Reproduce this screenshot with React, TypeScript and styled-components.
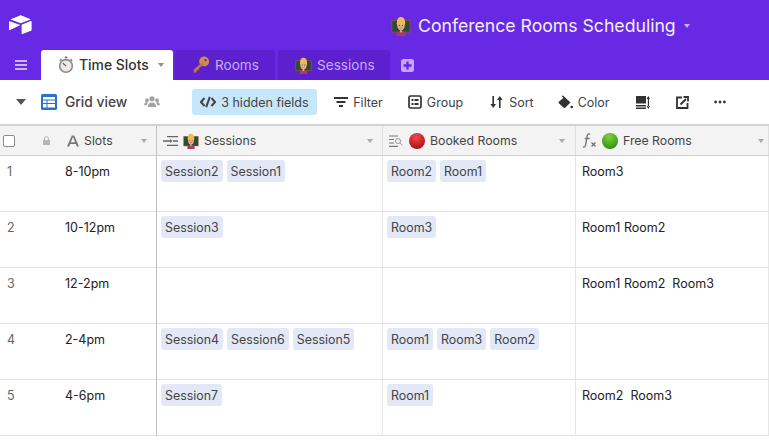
import React from "react";
import styled, { createGlobalStyle } from "styled-components";

const Global = createGlobalStyle`
  html, body { margin: 0; padding: 0; background: #fff; overflow: hidden; }
  body { font-family: Inter, "Liberation Sans", sans-serif; -webkit-font-smoothing: antialiased; }
  #root { width: 769px; height: 444px; overflow: hidden; }
`;

const Page = styled.div`width: 769px; height: 444px; overflow: hidden; display: flex; flex-direction: column;`;
const TopBar = styled.header`height: 50px; background: #6729e3; display: flex; align-items: center; padding: 2px 0 0 9px; box-sizing: border-box; flex: none;`;
const LogoSlot = styled.div`width: 382px; display: flex; align-items: center; height: 26px; flex: none; margin-top: -3px;`;
const Title = styled.div`display: flex; align-items: center; gap: 7px; color: #f3edff; font-size: 17.65px; line-height: 26px; white-space: nowrap;`;
const Caret = styled.span<{ $c: string; $w?: number; $ml?: number }>`
  display: inline-block; flex: none; width: 0; height: 0;
  margin-left: ${p => p.$ml ?? 0}px;
  border-left: ${p => (p.$w ?? 7) / 2}px solid transparent;
  border-right: ${p => (p.$w ?? 7) / 2}px solid transparent;
  border-top: ${p => Math.round((p.$w ?? 7) * 0.62)}px solid ${p => p.$c};
`;
const TabBar = styled.nav`height: 30px; background: #6729e3; display: flex; align-items: flex-end; flex: none;`;
const Menu = styled.div`width: 41px; height: 30px; display: flex; align-items: center; justify-content: center; flex: none;`;
const ActiveTab = styled.div`width: 132px; height: 30px; background: #fff; border-radius: 3px 3px 0 0; display: flex; align-items: center; padding-left: 17px; box-sizing: border-box; gap: 5px; font-size: 13.9px; font-weight: 500; color: #333; flex: none; margin-right: 2px;`;
const Tab = styled.div<{ $w: number; $pl: number }>`width: ${p => p.$w}px; height: 30px; background: #5c20cf; border-radius: 3px 3px 0 0; display: flex; align-items: center; padding-left: ${p => p.$pl}px; box-sizing: border-box; gap: 5px; font-size: 13.6px; color: #c7aef5; flex: none; margin-right: 3px;`;
const AddTab = styled.div`width: 26px; height: 30px; display: flex; align-items: center; justify-content: center; margin-left: 1px;`;
const Toolbar = styled.div`height: 44px; display: flex; align-items: center; flex: none; font-size: 12.5px; color: #444; background: #fff; padding-left: 16px; box-sizing: border-box;`;
const ToolCaret = styled.span`display: flex; margin-right: 15px;`;
const ViewName = styled.span`font-size: 13.8px; font-weight: 500; color: #444; margin: 0 17px 0 8px;`;
const HiddenBtn = styled.div`width: 125px; height: 26px; margin-left: 32px; background: #c6e6f9; border-radius: 3px; display: flex; align-items: center; padding-left: 8px; box-sizing: border-box; gap: 5px; flex: none; margin-right: 17px;`;
const ToolBtn = styled.div<{ $mr: number; $gap?: number }>`display: flex; align-items: center; gap: ${p => p.$gap ?? 6}px; margin-right: ${p => p.$mr}px; flex: none;`;
const Grid = styled.div`display: grid; grid-template-columns: 157px 226px 193px 193px; grid-template-rows: 32px repeat(5, 56px); flex: none; width: 769px;`;
const HeaderRow = styled.div`grid-column: 1 / -1; display: grid; grid-template-columns: 157px 226px 193px 193px; height: 32px; background: #f3f3f3; border-top: 2px solid #d2d2d2; border-bottom: 1px solid #cfcfcf; box-sizing: border-box;`;
const HeadCell = styled.div<{ $strong?: boolean; $pl: number; $pr: number }>`display: flex; align-items: center; gap: 5px; padding: 0 ${p => p.$pr}px 0 ${p => p.$pl}px; border-right: 1px solid ${p => p.$strong ? "#c0c0c0" : "#dedede"}; font-size: 12.3px; color: #444; min-width: 0;`;
const Grow = styled.span`flex: 1;`;
const Check = styled.span`width: 10px; height: 10px; background: #fff; border: 1px solid #8a8a8a; border-radius: 2px; flex: none; margin-right: 22px;`;
const LockSlot = styled.span`display: flex; margin-right: 11px;`;
const Cell = styled.div<{ $strong?: boolean; $pl: number }>`border-right: 1px solid ${p => p.$strong ? "#c0c0c0" : "#e6e6e6"}; border-bottom: 1px solid #e0e0e0; box-sizing: border-box; padding: 4px 0 0 ${p => p.$pl}px; display: flex; align-items: flex-start; gap: 4px; font-size: 12.5px; line-height: 24px; color: #222; white-space: pre; min-width: 0;`;
const RowNum = styled.span`width: 54px; flex: none; color: #666; font-size: 12.5px; margin-left: 1px;`;
const Chip = styled.span`display: inline-block; height: 22px; line-height: 24px; background: #e2e8f6; color: #444; padding: 0 4px; border-radius: 3px; font-size: 12.4px;`;

const Logo = () => (
  <svg width="23" height="20" viewBox="0 0 23 20">
    <path d="M11 .4 2.300 3.900c-.4.2-.4.6 0 .8l8.800 3.400c.4.1.9.1 1.300 0l8.600-3.400c.4-.2.4-.6 0-.8L12.400.4c-.4-.2-1-.2-1.400 0z" fill="#fff" />
    <path d="M12.600 10.200v8.400c0 .4.4.7.8.5l8.700-3.400c.3-.1.5-.4.5-.7V6.600c0-.4-.4-.7-.8-.5l-8.700 3.400c-.3.1-.5.4-.5.7z" fill="#fff" />
    <path d="M10.600 10.600 1 15.100c-.4.2-1 0-1-.5V6.700c0-.4.4-.7.8-.5l9.800 3.600c.4.2.4.6 0 .8z" fill="#fff" />
  </svg>
);
const Teacher = ({ s = 20 }: { s?: number }) => (
  <svg width={s} height={s} viewBox="0 0 20 20" style={{ flex: "none" }}>
    <rect x="0.500" y="4" width="19" height="12.500" fill="#8a5a2c" />
    <rect x="1.300" y="4.800" width="17.400" height="10.900" fill="#2f4a38" />
    <path d="M5.500 20v-2.500c0-1.500 1.500-2.500 4.500-2.500s4.500 1 4.500 2.500V20z" fill="#a23f63" />
    <path d="M8.700 14.500h2.600L10 17z" fill="#f1d3ae" />
    <path d="M5.800 7.500C5.800 3 7.500 1 10 1s4.200 2 4.200 6.500l-.6 2H6.400z" fill="#e9bd5c" />
    <ellipse cx="10" cy="9.700" rx="3.600" ry="4.600" fill="#e9b47e" />
    <path d="M6.200 8.200c1.400-2 6.200-2 7.600 0C13.300 4 6.700 4 6.200 8.200z" fill="#e9bd5c" />
    <circle cx="8.500" cy="9.300" r=".6" fill="#4a2e1e" /><circle cx="11.500" cy="9.300" r=".6" fill="#4a2e1e" />
    <path d="M8.700 11.900q1.300.8 2.600 0" stroke="#a8573a" strokeWidth=".6" fill="none" />
  </svg>
);
const Stopwatch = () => (
  <svg width="16" height="18" viewBox="0 0 18 20">
    <rect x="7.500" y="0.500" width="3" height="2" fill="#777" />
    <path d="M14 3.500l2 1.800" stroke="#777" strokeWidth="1.500" /><path d="M4 3.500 2 5.300" stroke="#777" strokeWidth="1.500" />
    <circle cx="9" cy="11" r="8" fill="#8d8d8d" /><circle cx="9" cy="11" r="6.200" fill="#eeeae2" />
    <path d="M9 11 5.500 8" stroke="#555" strokeWidth="1.200" />
  </svg>
);
const KeyIcon = () => (
  <svg width="18" height="18" viewBox="0 0 20 20">
    <circle cx="13.500" cy="6" r="5.500" fill="#d08f45" /><circle cx="15" cy="4.500" r="1.300" fill="#5c20cf" />
    <path d="M10.500 7.500 1.500 15.500l1 3.500 2.500-1 .5-2 2-.5.5-2 5-4z" fill="#b87a3c" />
  </svg>
);
const Hamburger = () => (
  <svg width="12" height="10" viewBox="0 0 12 10"><path d="M0 0h12v2H0zM0 4h12v2H0zM0 8h12v2H0z" fill="#cdb4f7" /></svg>
);
const Plus = () => (
  <svg width="13" height="13" viewBox="0 0 13 13"><rect width="13" height="13" rx="2.500" fill="#c5a6f8" /><path d="M5.300 2.500h2.400v2.800h2.800v2.400H7.700v2.800H5.300V7.700H2.500V5.300h2.800z" fill="#6729e3" /></svg>
);
const GridIcon = () => (
  <svg width="16" height="16" viewBox="0 0 16 16"><rect width="16" height="16" rx="1.500" fill="#2a71c8" /><path d="M2 3h12v2.500H2zM2 6.500h3.500V9H2zM6.500 6.500h7.500V9H6.500zM2 10h3.500v3.500H2zM6.500 10h7.500v3.500H6.500z" fill="#fff" /></svg>
);
const People = () => (
  <svg width="16" height="12" viewBox="0 0 17 13" fill="#a2a2a2">
    <circle cx="8.500" cy="3" r="2.800" /><circle cx="3" cy="4.500" r="2" /><circle cx="14" cy="4.500" r="2" />
    <path d="M4 12c0-3 1.500-5 4.500-5s4.500 2 4.500 5zM0 10c0-2 1-3.500 3-3.500l1 .5-1 3zM17 10c0-2-1-3.500-3-3.500l-1 .5 1 3z" />
  </svg>
);
const HiddenIcon = () => (
  <svg width="16" height="12" viewBox="0 0 16 12" fill="none" stroke="#444" strokeWidth="2">
    <path d="M4.500 2 1 6l3.500 4M11.500 2 15 6l-3.500 4M9.800.8 6.200 11.200" />
  </svg>
);
const FilterIcon = () => (
  <svg width="14" height="10" viewBox="0 0 14 10"><path d="M0 0h14v2H0zM2.500 4h9v2h-9zM5 8h4v2H5z" fill="#333" /></svg>
);
const GroupIcon = () => (
  <svg width="14" height="14" viewBox="0 0 14 14"><rect x="1" y="1" width="12" height="12" rx="1.500" fill="none" stroke="#333" strokeWidth="1.700" /><path d="M3.500 4h2v2h-2zM6.500 4h4v2h-4zM3.500 8h2v2h-2zM6.500 8h4v2h-4z" fill="#333" /></svg>
);
const SortIcon = () => (
  <svg width="13" height="12" viewBox="0 0 13 12" fill="#333"><path d="M2.400 0h1.600v8H6L3.200 12 .4 8h2zM9 12h1.600V4h2L9.800 0 7 4h2z" /></svg>
);
const ColorIcon = () => (
  <svg width="15" height="14" viewBox="0 0 15 14" fill="#333"><path d="M6.500 2 .8 6.800c-.4.4-.4 1 0 1.400l5 4.500c.4.400 1 .4 1.400 0l5.300-5.200z" /><path d="M3.800 1.200 4.800.3l3 3-1 .9z" /><circle cx="13.700" cy="12" r="1.300" /></svg>
);
const RowHeightIcon = () => (
  <svg width="14" height="13" viewBox="0 0 14 13" fill="#333"><path d="M0 0h10v7.500H0zM0 9h10v1.500H0zM0 11.500h10V13H0zM11.800 2.500h1.200v8h-1.200zM10.500 3 12.400 0l1.600 3zM10.500 10l1.900 3 1.600-3z" /></svg>
);
const ShareIcon = () => (
  <svg width="13" height="13" viewBox="0 0 13 13" fill="none" stroke="#333" strokeWidth="1.800"><path d="M6 1.500H1v10.500h10.500V7" /><path d="M4.500 8.500 10 3M7.500 1h4.500v4.500" /></svg>
);
const Dots = () => (
  <svg width="12" height="4" viewBox="0 0 12 4" fill="#333"><circle cx="1.600" cy="2" r="1.400" /><circle cx="6" cy="2" r="1.400" /><circle cx="10.400" cy="2" r="1.400" /></svg>
);
const Lock = () => (
  <svg width="9" height="9" viewBox="0 0 9 9" fill="#b5b5b5"><path d="M1 4h7v5H1z" /><path d="M2.500 4V2.700a2 2 0 0 1 4 0V4" fill="none" stroke="#b5b5b5" /></svg>
);
const TextA = () => (
  <svg width="12" height="12" viewBox="0 0 13 12"><path d="M5.200 0h2.600L13 12h-2.400l-1-2.700H3.400L2.400 12H0zM4.100 7.300h4.800L6.500 1.800z" fill="#777" /></svg>
);
const LinkIcon = () => (
  <svg width="15" height="10" viewBox="0 0 15 10" fill="#666"><path d="M4 0h11v1.300H4zM0 4.300h7V3l2.500 2L7 7V5.700H0zM10 4.300h5v1.400h-5zM4 8.700h11V10H4z" /></svg>
);
const LookupIcon = () => (
  <svg width="15" height="12" viewBox="0 0 15 12" fill="none"><path d="M0 1h9M0 4.500h5M0 8h5M0 11.300h9" stroke="#777" strokeWidth="1.200" /><circle cx="9" cy="6" r="2.500" stroke="#999" /><path d="m11 8 2.500 2.300" stroke="#999" /></svg>
);
const FxIcon = () => (
  <svg width="15" height="15" viewBox="0 0 15 15" fill="none"><path d="M8 1.200C5.800.4 5.200 1.800 4.900 4L3.700 11.500c-.3 2-1 2.800-2.700 2.300M2.700 5.500h5" stroke="#777" strokeWidth="1.400" /><path d="m9.500 9.500 4 4m0-4-4 4" stroke="#777" strokeWidth="1.400" /></svg>
);
const Ball = ({ c, d, id }: { c: string; d: string; id: string }) => (
  <svg width="16" height="16" viewBox="0 0 16 16"><defs><radialGradient id={id} cx=".45" cy=".25" r=".8"><stop offset="0" stopColor={c} /><stop offset="1" stopColor={d} /></radialGradient></defs><circle cx="8" cy="8" r="8" fill={`url(#${id})`} /></svg>
);

const rows = [
  { n: 1, slot: "8-10pm", s: ["Session2", "Session1"], b: ["Room2", "Room1"], f: "Room3" },
  { n: 2, slot: "10-12pm", s: ["Session3"], b: ["Room3"], f: "Room1 Room2" },
  { n: 3, slot: "12-2pm", s: [], b: [], f: "Room1 Room2  Room3" },
  { n: 4, slot: "2-4pm", s: ["Session4", "Session6", "Session5"], b: ["Room1", "Room3", "Room2"], f: "" },
  { n: 5, slot: "4-6pm", s: ["Session7"], b: ["Room1"], f: "Room2  Room3" },
];

export default function App() {
  return (
    <Page>
      <Global />
      <TopBar>
        <LogoSlot><Logo /></LogoSlot>
        <Title><Teacher /><span>Conference Rooms Scheduling</span><Caret $c="#c9b3f5" $w={7} $ml={1} /></Title>
      </TopBar>
      <TabBar>
        <Menu><Hamburger /></Menu>
        <ActiveTab><Stopwatch /><span>Time Slots</span><Caret $c="#8f8f8f" $w={7} $ml={4} /></ActiveTab>
        <Tab $w={100} $pl={17}><KeyIcon /><span>Rooms</span></Tab>
        <Tab $w={112} $pl={17}><Teacher s={17} /><span>Sessions</span></Tab>
        <AddTab><Plus /></AddTab>
      </TabBar>
      <Toolbar>
        <ToolCaret><Caret $c="#555" $w={10} $ml={0} /></ToolCaret>
        <GridIcon />
        <ViewName>Grid view</ViewName>
        <People />
        <HiddenBtn><HiddenIcon /><span>3 hidden fields</span></HiddenBtn>
        <ToolBtn $mr={25} $gap={5}><FilterIcon /><span>Filter</span></ToolBtn>
        <ToolBtn $mr={27} $gap={5}><GroupIcon /><span>Group</span></ToolBtn>
        <ToolBtn $mr={24}><SortIcon /><span>Sort</span></ToolBtn>
        <ToolBtn $mr={26} $gap={5}><ColorIcon /><span>Color</span></ToolBtn>
        <ToolBtn $mr={26}><RowHeightIcon /></ToolBtn>
        <ToolBtn $mr={25}><ShareIcon /></ToolBtn>
        <ToolBtn $mr={0}><Dots /></ToolBtn>
      </Toolbar>
      <Grid>
        <HeaderRow>
          <HeadCell $strong $pl={3} $pr={9}><Check /><LockSlot><Lock /></LockSlot><TextA /><span>Slots</span><Grow /><Caret $c="#aaa" $w={6} /></HeadCell>
          <HeadCell $pl={6} $pr={9}><LinkIcon /><Teacher s={16} /><span>Sessions</span><Grow /><Caret $c="#aaa" $w={6} /></HeadCell>
          <HeadCell $pl={6} $pr={10}><LookupIcon /><Ball id="r" c="#f2484a" d="#a50f14" /><span>Booked Rooms</span><Grow /><Caret $c="#aaa" $w={6} /></HeadCell>
          <HeadCell $pl={6} $pr={4}><FxIcon /><Ball id="g" c="#7ed43c" d="#2c8a12" /><span>Free Rooms</span><Grow /><Caret $c="#aaa" $w={6} /></HeadCell>
        </HeaderRow>
        {rows.map(r => (
          <React.Fragment key={r.n}>
            <Cell $strong $pl={6}><RowNum>{r.n}</RowNum><span>{r.slot}</span></Cell>
            <Cell $pl={4}>{r.s.map(x => <Chip key={x}>{x}</Chip>)}</Cell>
            <Cell $pl={4}>{r.b.map(x => <Chip key={x}>{x}</Chip>)}</Cell>
            <Cell $pl={6}>{r.f}</Cell>
          </React.Fragment>
        ))}
      </Grid>
    </Page>
  );
}
